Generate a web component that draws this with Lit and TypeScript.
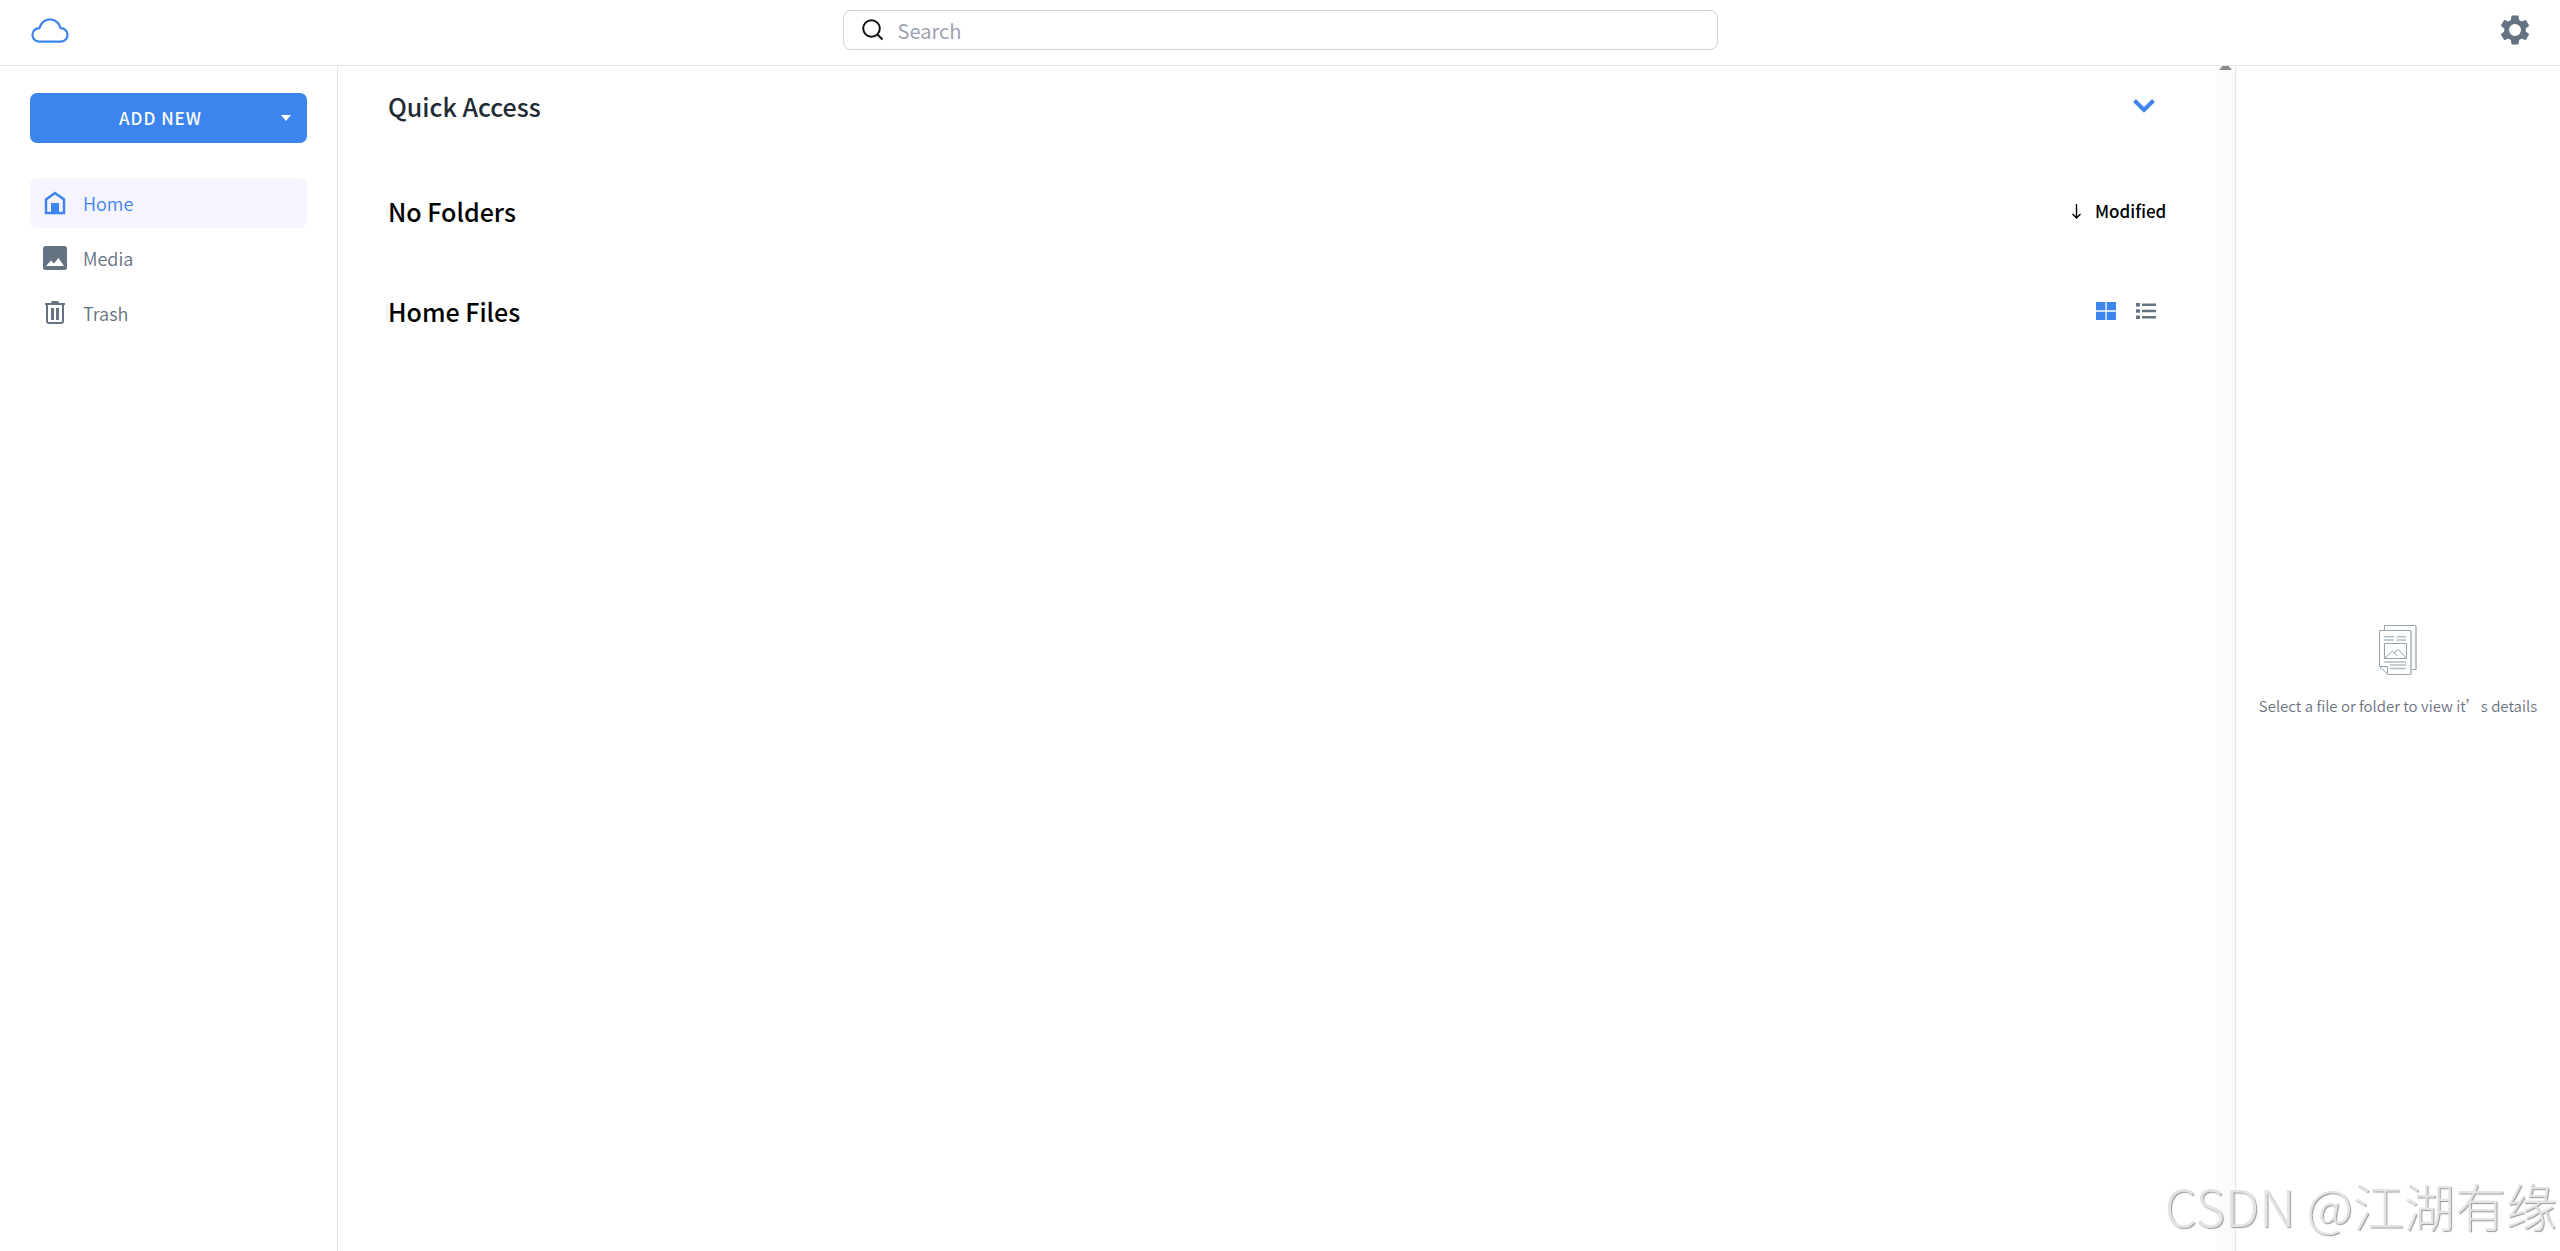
import { LitElement, html, css, svg } from "lit";
import { customElement, state } from "lit/decorators.js";
import { classMap } from "lit/directives/class-map.js";

const houseIcon = svg`<path d="M2 8.500 11 2l9 6.500V22H2Z" fill="none" stroke="currentColor" stroke-width="2.500"/><path d="M7 12h8v10H7Z"/>`;
const imageIcon = svg`<path fill-rule="evenodd" d="M2.500 0h19A2.500 2.500 0 0 1 24 2.500v19a2.500 2.500 0 0 1-2.500 2.500h-19A2.500 2.500 0 0 1 0 21.500v-19A2.500 2.500 0 0 1 2.500 0ZM3 20h18L15.500 12 11 17.500 8 14.500Z"/>`;
const trashIcon = svg`<path d="M1 2h6l1-2h6l1 2h6v2H1Z"/><path d="M3 4v16q0 2 2 2h12q2 0 2-2V4" fill="none" stroke="currentColor" stroke-width="2"/><path d="M7 7h3v12H7ZM12 7h3v12h-3Z"/>`;

const navItems = [
  { id: "home", label: "Home", box: "0 0 22 24", icon: houseIcon },
  { id: "media", label: "Media", box: "0 0 24 24", icon: imageIcon },
  { id: "trash", label: "Trash", box: "0 0 22 24", icon: trashIcon },
];

@customElement("app-root")
export class AppRoot extends LitElement {
  @state() private active = "home";
  @state() private view = "grid";

  static styles = css`
    :host {
      display: flex;
      flex-direction: column;
      position: relative;
      min-height: 100vh;
      background: #fff;
      color: #000;
      font-family: "Noto Sans CJK SC", sans-serif;
      font-size: 17px;
      line-height: 24px;
    }
    * { box-sizing: border-box; }
    button, input, select {
      font: inherit;
      color: inherit;
      margin: 0;
      padding: 0;
      border: 0;
      background: none;
    }
    button { cursor: pointer; }
    svg { display: block; flex: none; fill: currentColor; }
    h2 { margin: 0; font-size: 25px; line-height: 36px; font-weight: 500; }

    .header {
      display: grid;
      grid-template-columns: 1fr minmax(300px, 875px) 1fr;
      align-items: start;
      height: 66px;
      padding: 10px 30px 0;
      border-bottom: 1px solid #e5e5e8;
    }
    .brand { justify-self: start; color: #3c85ee; padding-top: 6px; }
    .search {
      display: flex;
      align-items: center;
      gap: 14px;
      height: 40px;
      padding: 0 18px;
      border: 1px solid #d1d1db;
      border-radius: 8px;
    }
    .search input { flex: 1; min-width: 0; outline: none; font-size: 20px; line-height: 28px; padding-top: 2px; }
    .search input::placeholder { color: #9ca3af; opacity: 1; }
    .settings { justify-self: end; padding-top: 5px; color: #637381; }

    .body { flex: 1; display: grid; grid-template-columns: 338px minmax(0, 1fr) 325px; }
    .sidebar { padding: 27px 30px; border-right: 1px solid #e5e5e8; }
    .add {
      display: flex;
      align-items: center;
      width: 100%;
      height: 50px;
      padding: 0 16px 0 10px;
      border-radius: 7px;
      background: #3c85ee;
      color: #fff;
      font-weight: 500;
    }
    .add-label { flex: 1; letter-spacing: 1px; }
    .nav { display: flex; flex-direction: column; gap: 5px; margin-top: 35px; }
    .nav-item {
      display: flex;
      align-items: center;
      gap: 16px;
      height: 50px;
      padding: 0 13px;
      border-radius: 7px;
      color: #637381;
      font-size: 18px;
      font-weight: 350;
      text-decoration: none;
    }
    .nav-item.active { background: #f6f5fd; color: #3c85ee; }
    .nav-icon { width: 24px; display: flex; justify-content: center; }

    .main { padding: 22px 49px 0 50px; }
    .row { display: flex; align-items: center; justify-content: space-between; }
    .row + .row { margin-top: 69px; }
    .row.files { margin-top: 64px; }
    .quick { color: #212b36; }
    .toggle { color: #3c85ee; margin-right: 12px; }
    .sort { display: flex; align-items: center; gap: 14px; font-weight: 500; }
    .sort select { appearance: none; }
    .views { display: flex; gap: 20px; margin-right: 11px; color: #637381; }
    .views .on { color: #3c85ee; }
    .content { display: grid; grid-template-columns: minmax(0, 1fr) 19px; }
    .track { background: #fbfbfb; display: flex; justify-content: center; color: #8b8b8b; }

    .details {
      display: flex;
      flex-direction: column;
      align-items: center;
      justify-content: center;
      gap: 19px;
      padding-top: 26px;
      border-left: 1px solid #e5e5e8;
      color: #637381;
    }
    .details p { margin: 0; font-size: 15px; font-weight: 350; white-space: nowrap; color: #6b7280; }
    .watermark {
      position: absolute;
      right: 3px;
      bottom: 10px;
      font-size: 51px;
      line-height: 72px;
      font-weight: 300;
      color: #e3e3e3;
      text-shadow: 1px 1px 1px #999;
      pointer-events: none;
    }
  `;

  render() {
    return html`
      <header class="header">
        <a class="brand" href="#home" aria-label="Home">
          <svg width="40" height="28" viewBox="0 0 40 28">
            <path d="M9 25.700A6.800 6.800 0 0 1 9.500 12.100 10.700 10.700 0 0 1 30.500 12.100 6.800 6.800 0 0 1 31 25.700Z" fill="none" stroke="currentColor" stroke-width="2.200" stroke-linejoin="round"/>
          </svg>
        </a>
        <label class="search">
          <svg width="22" height="22" viewBox="0 0 22 22">
            <path d="M9.500 1.200a8.300 8.300 0 1 0 0 16.600 8.300 8.300 0 1 0 0-16.600ZM15.200 15.200l5.300 5.300" fill="none" stroke="#111" stroke-width="2"/>
          </svg>
          <input type="search" placeholder="Search" aria-label="Search" />
        </label>
        <button class="settings" aria-label="Settings">
          <svg width="30" height="30" viewBox="2.270 2 19.460 20">
            <path d="M19.140 12.940c.04-.3.060-.610.060-.940 0-.320-.02-.640-.07-.940l2.030-1.580c.18-.140.230-.410.120-.610l-1.920-3.320c-.12-.220-.37-.290-.59-.220l-2.390.960c-.5-.380-1.030-.7-1.620-.940l-.36-2.540c-.04-.240-.24-.410-.48-.410h-3.840c-.24 0-.43.170-.47.410l-.36 2.540c-.59.240-1.130.570-1.620.940l-2.390-.960c-.22-.08-.47 0-.59.220L2.740 8.870c-.12.210-.08.470.12.610l2.030 1.580c-.05.3-.09.630-.09.940s.02.640.07.940l-2.030 1.580c-.18.140-.23.410-.12.610l1.920 3.320c.12.220.37.290.59.220l2.390-.960c.5.380 1.030.7 1.620.940l.36 2.540c.05.240.24.410.48.410h3.840c.24 0 .44-.170.47-.410l.36-2.540c.59-.240 1.130-.560 1.620-.940l2.390.960c.22.080.470 0 .590-.220l1.920-3.320c.12-.220.070-.470-.12-.610l-2.010-1.580ZM12 16a4 4 0 1 1 0-8 4 4 0 0 1 0 8Z"/>
          </svg>
        </button>
      </header>
      <div class="body">
        <aside class="sidebar">
          <button class="add">
            <span class="add-label">ADD NEW</span>
            <svg width="10" height="6" viewBox="0 0 10 6"><path d="M0 0h10L5 6Z"/></svg>
          </button>
          <nav class="nav">
            ${navItems.map(
              (item) => html`<a
                class=${classMap({ "nav-item": true, active: this.active === item.id })}
                href="#${item.id}"
                @click=${() => (this.active = item.id)}
              >
                <span class="nav-icon">
                  <svg height="24" width=${item.id === "media" ? 24 : 22} viewBox=${item.box}>${item.icon}</svg>
                </span>
                ${item.label}
              </a>`
            )}
          </nav>
        </aside>
        <div class="content">
          <main class="main">
            <section class="row">
              <h2 class="quick">Quick Access</h2>
              <button class="toggle" aria-label="Toggle quick access">
                <svg width="22" height="14" viewBox="0 0 22 14"><path d="m1.500 1.500 9.500 9.500 9.500-9.500" fill="none" stroke="currentColor" stroke-width="4"/></svg>
              </button>
            </section>
            <section class="row">
              <h2>No Folders</h2>
              <div class="sort">
                <svg width="9" height="15" viewBox="0 0 9 15"><path d="M4.500 0v14M.500 10l4 4 4-4" fill="none" stroke="currentColor" stroke-width="1.400"/></svg>
                <select aria-label="Sort by"><option>Modified</option></select>
              </div>
            </section>
            <section class="row files">
              <h2>Home Files</h2>
              <div class="views">
                <button class=${classMap({ on: this.view === "grid" })} aria-label="Grid view" @click=${() => (this.view = "grid")}>
                  <svg width="20" height="18" viewBox="0 0 20 18"><path d="M0 0h9.400v8.300H0ZM10.700 0H20v8.300h-9.300ZM0 9.700h9.400V18H0ZM10.700 9.700H20V18h-9.300Z"/></svg>
                </button>
                <button class=${classMap({ on: this.view === "list" })} aria-label="List view" @click=${() => (this.view = "list")}>
                  <svg width="20" height="18" viewBox="0 0 20 18"><path d="M0 1h4v3.500H0ZM6 1.500h14V4H6ZM0 7.300h4v3.500H0ZM6 7.800h14v2.500H6ZM0 13.500h4V17H0ZM6 14h14v2.500H6Z"/></svg>
                </button>
              </div>
            </section>
          </main>
          <div class="track"><svg width="13" height="4" viewBox="0 0 13 4"><path d="M3.500 0h6L13 4H0Z"/></svg></div>
        </div>
        <aside class="details">
          <svg width="38" height="50" viewBox="0 0 38 50" stroke="#94a3b0">
            <g fill="none">
              <path d="M5.500 5V.500h31V44.500H33" />
              <path d="M37 1v43.500" stroke="#b9c4cd" stroke-width="2"/>
              <path d="M.500 5.500h31v44H9L.500 41.500Z"/>
              <path d="M32 6v43" stroke="#b9c4cd" stroke-width="2"/>
              <path d="M.500 41.500h8v8"/>
              <path d="M5 11.700h10M17.500 11.700H27M5 15h10M17.500 15H27M5 37h22M11 40h16M11 43.500h16" stroke="#b3bfc8" stroke-width="1.500"/>
              <path d="M5.500 18.500h22v15h-22Z"/>
              <path d="m6 33 7.500-7 5 5M15 28l4.500-3.500L27 33"/>
            </g>
          </svg>
          <p lang="zh-CN">Select a file or folder to view it’s details</p>
        </aside>
      </div>
      <div class="watermark">CSDN @江湖有缘</div>
    `;
  }
}
